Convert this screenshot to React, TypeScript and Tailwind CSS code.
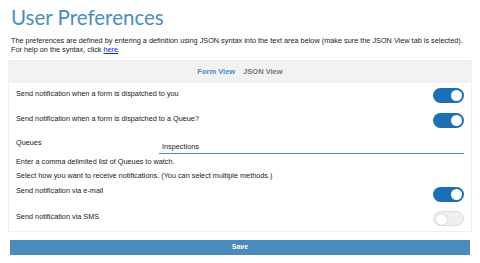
import { useState } from "react";

function Toggle({ on, onChange }: { on: boolean; onChange: () => void }) {
  return (
    <button
      onClick={onChange}
      className={`relative w-[31px] h-[15px] rounded-full shrink-0 ${
        on ? "bg-[#1b6fb6]" : "bg-[#efefef] border border-[#dddddd]"
      }`}
    >
      <span
        className={`absolute top-[2px] w-[11px] h-[11px] rounded-full bg-white ${
          on ? "right-[2px]" : "left-[2px] top-[1px] shadow-[0_0_1px_rgba(0,0,0,0.4)]"
        }`}
      />
    </button>
  );
}

export default function App() {
  const [dispatchedYou, setDispatchedYou] = useState(true);
  const [dispatchedQueue, setDispatchedQueue] = useState(true);
  const [email, setEmail] = useState(true);
  const [sms, setSms] = useState(false);
  const [queues, setQueues] = useState("Inspections");
  const [tab, setTab] = useState("form");

  return (
    <main className="w-[480px] h-[263px] bg-white text-[#222] font-['Liberation_Sans',Arial,sans-serif] px-[8px] overflow-hidden">
      <h1 className="font-['Lato',sans-serif] text-[20.5px] leading-[28px] text-[#4a8cc4] pl-[3px] pt-[3px]">
        User Preferences
      </h1>

      <p className="text-[7.3px] leading-[9px] mt-[5px] pl-[3px]">
        The preferences are defined by entering a definition using JSON syntax into the text area below (make sure the JSON View tab is selected).
        <br />
        For help on the syntax, click{" "}
        <a href="#" className="text-[#2222ee] underline">
          here
        </a>
        .
      </p>

      <div className="mt-[6px] border border-[#eeeeee] bg-white">
        <div className="h-[22px] bg-[#f2f2f2] flex items-center justify-center gap-[8px] text-[7.5px] font-bold">
          <button
            onClick={() => setTab("form")}
            className={tab === "form" ? "text-[#4a8cc4]" : "text-[#777]"}
          >
            Form View
          </button>
          <button
            onClick={() => setTab("json")}
            className={tab === "json" ? "text-[#4a8cc4]" : "text-[#777]"}
          >
            JSON View
          </button>
        </div>

        <div className="px-[7px] pt-[5px] pb-[4px] text-[7.3px] leading-[9px]">
          <div className="flex justify-between items-start h-[25px]">
            <span className="pt-[1px]">Send notification when a form is dispatched to you</span>
            <Toggle on={dispatchedYou} onChange={() => setDispatchedYou(!dispatchedYou)} />
          </div>
          <div className="flex justify-between items-start h-[23px]">
            <span className="pt-[1px]">Send notification when a form is dispatched to a Queue?</span>
            <Toggle on={dispatchedQueue} onChange={() => setDispatchedQueue(!dispatchedQueue)} />
          </div>

          <div className="flex items-start mt-[2px]">
            <span className="w-[143px] shrink-0">Queues</span>
            <input
              value={queues}
              onChange={(e) => setQueues(e.target.value)}
              className="flex-1 h-[15px] mt-[1px] px-[3px] text-[7.3px] border-b-[1.5px] border-[#4a8cc4] outline-none"
            />
          </div>
          <p className="mt-[3px]">Enter a comma delimited list of Queues to watch.</p>
          <p className="mt-[5px]">Select how you want to receive notifications. (You can select multiple methods.)</p>

          <div className="flex justify-between items-start h-[26px] mt-[5px]">
            <span className="pt-[1px]">Send notification via e-mail</span>
            <div className="pt-[2px]">
              <Toggle on={email} onChange={() => setEmail(!email)} />
            </div>
          </div>
          <div className="flex justify-between items-start h-[16px]">
            <span className="pt-[1px]">Send notification via SMS</span>
            <Toggle on={sms} onChange={() => setSms(!sms)} />
          </div>
        </div>
      </div>

      <button className="mt-[2px] ml-[2px] w-[460px] h-[15px] bg-[#4a8bbd] text-white text-[7px] font-bold">
        Save
      </button>
    </main>
  );
}
